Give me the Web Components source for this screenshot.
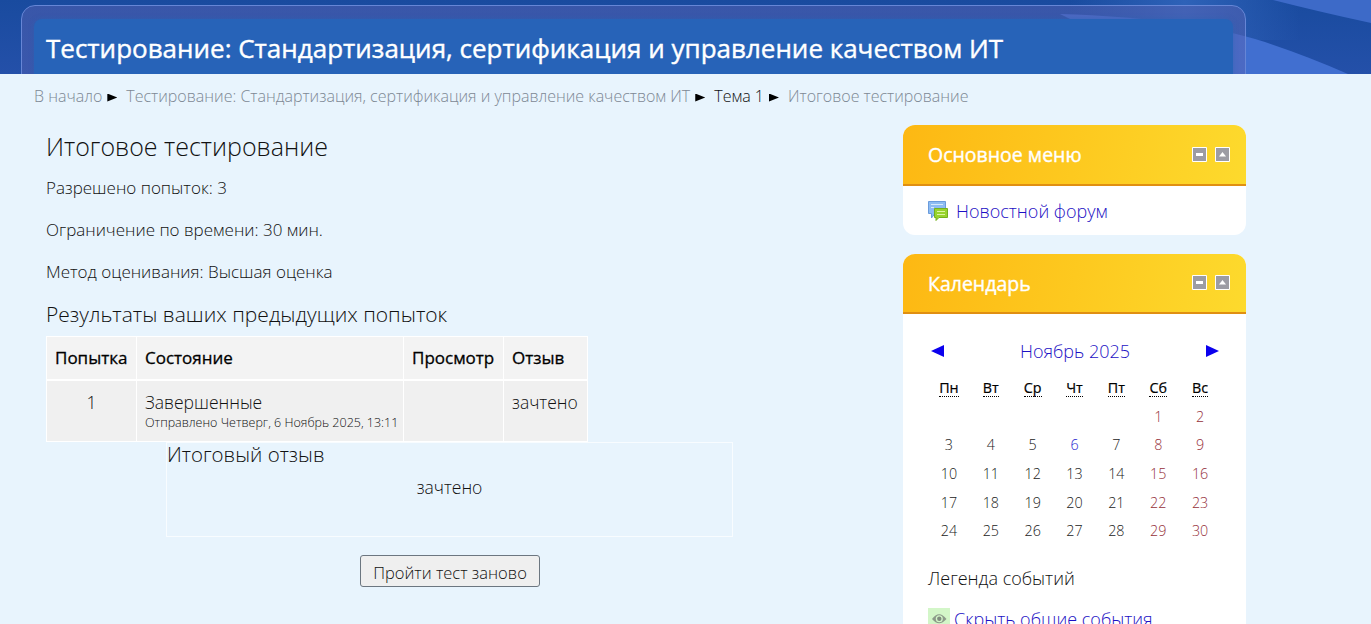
<!DOCTYPE html>
<html lang="ru">
<head>
<meta charset="utf-8">
<title>Итоговое тестирование</title>
<style>
    html, body { margin: 0; height: 624px; overflow: hidden; }
    body {
        background: #e8f4fd;
        color: #111;
        font-family: "Open Sans", "Noto Sans", sans-serif;
        font-weight: 300;
        font-size: 16px;
    }
</style>
</head>
<body>
<quiz-page></quiz-page>

<script>
class SiteHeader extends HTMLElement {
    constructor() {
        super();
        this.attachShadow({ mode: "open" });
    }

    connectedCallback() {
        this.shadowRoot.innerHTML = `
            <style>
                :host {
                    display: grid;
                    height: 74px;
                    overflow: hidden;
                    background: #1c4da3;
                }
                svg, .frame { grid-area: 1 / 1; }
                svg { width: 1371px; height: 74px; }
                .frame {
                    box-sizing: border-box;
                    width: 1225px;
                    height: 90px;
                    margin: 5px 0 0 21px;
                    padding: 13px 12px 0;
                    border: 1px solid #6686d6;
                    border-radius: 14px;
                    background: linear-gradient(rgba(88, 98, 178, .5), rgba(88, 98, 178, .4));
                    z-index: 1;
                }
                .panel {
                    height: 80px;
                    border-radius: 8px;
                    background: #2763b8;
                    box-shadow: 0 0 5px rgba(39, 99, 184, .5);
                }
                h1 {
                    margin: 0;
                    padding-left: 12px;
                    color: #fff;
                    font-size: 26px;
                    font-weight: 400;
                    line-height: 58px;
                    white-space: nowrap;
                    -webkit-text-stroke: .4px #fff;
                }
            </style>
            <svg viewBox="0 0 1371 74" preserveAspectRatio="none">
                <defs>
                    <linearGradient id="sky" x2="0" y2="1">
                        <stop offset="0" stop-color="#194b9f"/>
                        <stop offset="1" stop-color="#2450a9"/>
                    </linearGradient>
                    <linearGradient id="ray">
                        <stop offset="0" stop-color="#2e62b8" stop-opacity="0"/>
                        <stop offset=".5" stop-color="#2e62b8"/>
                        <stop offset="1" stop-color="#2e62b8" stop-opacity="0"/>
                    </linearGradient>
                </defs>
                <rect width="1371" height="74" fill="url(#sky)"/>
                <rect x="1070" width="230" height="40" fill="url(#ray)"/>
                <path d="M1273 0H1371V23Q1320 12 1273 0Z" fill="#3d6ac8"/>
                <path d="M1060 14Q1190 18 1265 42Q1310 57 1348 74H1180Z" fill="#416fd0"/>
            </svg>
            <div class="frame"><div class="panel"><h1><slot></slot></h1></div></div>
        `;
    }
}
customElements.define("site-header", SiteHeader);

class BreadCrumbs extends HTMLElement {
    constructor() {
        super();
        this.attachShadow({ mode: "open" });
    }

    connectedCallback() {
        this.shadowRoot.innerHTML = `
            <style>
                :host {
                    display: flex;
                    align-items: center;
                    height: 22px;
                    padding: 11px 0 0 34px;
                    white-space: nowrap;
                }
                ::slotted(a) { color: #7d8894; font-size: 16px; }
                ::slotted(b) { color: #111; font-weight: 300; }
                ::slotted(i) {
                    width: 10px;
                    height: 8px;
                    margin: 3px 9px 0 5px;
                    background: #000;
                    clip-path: polygon(0 0, 100% 50%, 0 100%);
                }
            </style>
            <slot></slot>
        `;
    }
}
customElements.define("bread-crumbs", BreadCrumbs);

class AttemptTable extends HTMLElement {
    constructor() {
        super();
        this.attachShadow({ mode: "open" });
    }

    connectedCallback() {
        this.shadowRoot.innerHTML = `
            <style>
                :host { display: block; }
                table {
                    width: 542px;
                    table-layout: fixed;
                    border-collapse: collapse;
                    background: #f0f0f0;
                }
                th, td {
                    box-sizing: border-box;
                    border: 1px solid #fff;
                    padding: 0 8px;
                    text-align: left;
                    vertical-align: top;
                    white-space: nowrap;
                }
                th {
                    height: 43px;
                    padding-top: 9px;
                    border-bottom-width: 2px;
                    background: #f3f3f3;
                    color: #000;
                    font-size: 17px;
                    font-weight: 400;
                    line-height: 24px;
                    -webkit-text-stroke: .3px #000;
                }
                td { height: 62px; padding-top: 9px; font-size: 17.5px; line-height: 24px; }
                td:first-child { text-align: center; }
                small { display: block; font-size: 12.5px; line-height: 17px; }
            </style>
            <table>
                <colgroup><col style="width:90px"><col style="width:267px"><col style="width:100px"><col></colgroup>
                <tr><th><span>Попытка</span></th><th><span>Состояние</span></th><th><span>Просмотр</span></th><th><span>Отзыв</span></th></tr>
                <tr>
                    <td>1</td>
                    <td><span>Завершенные</span><small><span>Отправлено Четверг, 6 Ноябрь 2025, 13:11</span></small></td>
                    <td></td>
                    <td><span>зачтено</span></td>
                </tr>
            </table>
        `;
    }
}
customElements.define("attempt-table", AttemptTable);

class FeedbackBox extends HTMLElement {
    constructor() {
        super();
        this.attachShadow({ mode: "open" });
    }

    connectedCallback() {
        this.shadowRoot.innerHTML = `
            <style>
                :host {
                    display: block;
                    box-sizing: border-box;
                    width: 567px;
                    height: 95px;
                    margin-left: 120px;
                    border: 1px solid #f8fcff;
                }
                h3 { margin: 0; font-size: 20.5px; font-weight: 300; line-height: 22px; }
                p { margin: 10px 0 0; font-size: 17.5px; line-height: 24px; text-align: center; }
            </style>
            <h3><slot name="title"></slot></h3>
            <p><slot></slot></p>
        `;
    }
}
customElements.define("feedback-box", FeedbackBox);

class SideBlock extends HTMLElement {
    constructor() {
        super();
        this.attachShadow({ mode: "open" });
    }

    connectedCallback() {
        this.shadowRoot.innerHTML = `
            <style>
                :host {
                    display: block;
                    width: 343px;
                    border-radius: 12px;
                    background: #fff;
                    overflow: hidden;
                }
                header {
                    display: flex;
                    box-sizing: border-box;
                    align-items: center;
                    height: var(--head, 61px);
                    padding: 0 16px 0 25px;
                    border-bottom: 2px solid #e08f12;
                    background: linear-gradient(100deg, #fdb813, #fdc91f 50%, #fdda2d);
                }
                h2 {
                    flex: 1;
                    margin: 0;
                    color: #fff;
                    font-size: 19.5px;
                    font-weight: 400;
                    -webkit-text-stroke: .4px #fff;
                }
                svg { width: 15px; height: 15px; margin-left: 8px; margin-top: -1px; }
            </style>
            <header>
                <h2><slot name="title"></slot></h2>
                <svg viewBox="0 0 15 15"><path d="M.5.5h14v14H.5z" fill="#9c9ca4" stroke="#fff"/><path d="M4 6h7v3H4z" fill="#fff"/></svg>
                <svg viewBox="0 0 15 15"><path d="M.5.5h14v14H.5z" fill="#9c9ca4" stroke="#fff"/><path d="M4 9.5 7.5 5 11 9.5z" fill="#fff"/></svg>
            </header>
            <slot></slot>
        `;
    }
}
customElements.define("side-block", SideBlock);

class MonthCalendar extends HTMLElement {
    constructor() {
        super();
        this.attachShadow({ mode: "open" });
    }

    connectedCallback() {
        const names = ["Пн", "Вт", "Ср", "Чт", "Пт", "Сб", "Вс"];
        const head = names.map(n => `<b><abbr>${n}</abbr></b>`).join("");
        let days = "<span></span>".repeat(5);
        for (let d = 1; d <= 30; d++) {
            const weekend = (d + 4) % 7 > 4;
            const cls = d === 6 ? "today" : weekend ? "weekend" : "";
            days += `<span class="${cls}">${d}</span>`;
        }

        this.shadowRoot.innerHTML = `
            <style>
                :host { display: block; padding: 22px 25px 0; }
                nav {
                    display: flex;
                    align-items: center;
                    justify-content: space-between;
                    height: 30px;
                    padding: 0 2px 0 3px;
                    color: #1c10c4;
                    font-size: 18px;
                }
                i { width: 13px; height: 12px; background: #0b00ee; }
                .prev { clip-path: polygon(100% 0, 0 50%, 100% 100%); }
                .next { clip-path: polygon(0 0, 100% 50%, 0 100%); }
                .grid {
                    display: grid;
                    grid-template-columns: repeat(7, 41.86px);
                    grid-auto-rows: 28.7px;
                    line-height: 28px;
                    font-size: 14.3px;
                    text-align: center;
                    margin-top: 8px;
                    color: #222;
                }
                b { color: #000; font-weight: 400; -webkit-text-stroke: .2px #000; }
                abbr { border-bottom: 1px dotted #000; display: inline-block; line-height: 16px; }
                .weekend { color: #96303a; }
                .today { color: #2a1fd0; }
            </style>
            <nav><i class="prev"></i><span>Ноябрь 2025</span><i class="next"></i></nav>
            <div class="grid">${head}${days}</div>
        `;
    }
}
customElements.define("month-calendar", MonthCalendar);

class QuizPage extends HTMLElement {
    constructor() {
        super();
        this.attachShadow({ mode: "open" });
    }

    connectedCallback() {
        this.shadowRoot.innerHTML = `
            <style>
                :host { display: block; height: 624px; overflow: hidden; }
                .columns {
                    display: grid;
                    grid-template-columns: 807px 343px;
                    column-gap: 50px;
                    padding: 18px 0 0 46px;
                }
                main { width: 807px; }
                h2 { margin: 5px 0 0; font-size: 25px; font-weight: 300; line-height: 32px; }
                h3 { margin: 0; font-size: 21px; font-weight: 300; line-height: 42px; height: 43px; }
                .info { margin: 0; line-height: 42px; font-size: 17px; }
                .facts { margin-top: 5px; }
                button {
                    display: block;
                    width: 180px;
                    height: 32px;
                    margin: 18px 0 0 314px;
                    padding: 2px 0 0;
                    border: 1px solid #6c7680;
                    border-radius: 3px;
                    background: #efefef;
                    color: #111;
                    font: 300 16.5px "Open Sans", "Noto Sans", sans-serif;
                }
                aside { display: flex; flex-direction: column; gap: 19px; }
                .forum {
                    display: flex;
                    align-items: center;
                    height: 49px;
                    padding-left: 25px;
                    color: #1c10c4;
                    font-size: 18px;
                }
                .forum svg { width: 20px; height: 20px; margin-right: 8px; }
                .legend { margin: 18px 0 0 25px; font-size: 18px; line-height: 28px; }
                .event {
                    display: flex;
                    align-items: center;
                    margin: 13px 0 0 25px;
                    height: 28px;
                    color: #1c10c4;
                    font-size: 18px;
                }
                .event svg { width: 22px; height: 22px; margin-right: 4px; }
            </style>
            <site-header><span>Тестирование: Стандартизация, сертификация и управление качеством ИТ</span></site-header>
            <bread-crumbs>
                <a>В начало</a><i></i><a>Тестирование: Стандартизация, сертификация и управление качеством ИТ</a><i></i><b>Тема 1</b><i></i><a>Итоговое тестирование</a>
            </bread-crumbs>
            <div class="columns">
                <main>
                    <h2><span>Итоговое тестирование</span></h2>
                    <div class="facts">
                        <p class="info"><span>Разрешено попыток: 3</span></p>
                        <p class="info"><span>Ограничение по времени: 30 мин.</span></p>
                        <p class="info"><span>Метод оценивания: Высшая оценка</span></p>
                    </div>
                    <h3><span>Результаты ваших предыдущих попыток</span></h3>
                    <attempt-table></attempt-table>
                    <feedback-box><span slot="title">Итоговый отзыв</span><span>зачтено</span></feedback-box>
                    <button><span>Пройти тест заново</span></button>
                </main>
                <aside>
                    <side-block>
                        <span slot="title">Основное меню</span>
                        <div class="forum">
                            <svg viewBox="0 0 20 20">
                                <path d="M.5.5h17v12H7L3.5 17v-4.500H.5z" fill="#8dbcf2" stroke="#6a9bdc"/>
                                <path d="M3 3.500h12M3 6.500h3" stroke="#d8eafc"/>
                                <path d="M6.500 7.500h13v9H11l-3 3v-3H6.500z" fill="#98d32c" stroke="#74b01e"/>
                                <path d="M9 10.500h8M9 13.500h8" stroke="#dcf5a0"/>
                            </svg>
                            <span>Новостной форум</span>
                        </div>
                    </side-block>
                    <side-block style="--head: 60px; height: 400px">
                        <span slot="title">Календарь</span>
                        <month-calendar></month-calendar>
                        <p class="legend"><span>Легенда событий</span></p>
                        <div class="event">
                            <svg viewBox="0 0 22 22">
                                <path d="M0 0h22v22H0z" fill="#d3f6c8"/>
                                <path d="M4 11Q11 1.500 18.500 11 11 19.500 4 11z" fill="#8d9a8a"/>
                                <circle cx="11.300" cy="10.800" r="3.500" fill="#d3f6c8"/>
                                <circle cx="11.300" cy="10.800" r="2.200" fill="#808c7e"/>
                            </svg>
                            <span>Скрыть общие события</span>
                        </div>
                    </side-block>
                </aside>
            </div>
        `;
    }
}
customElements.define("quiz-page", QuizPage);
</script>
</body>
</html>
